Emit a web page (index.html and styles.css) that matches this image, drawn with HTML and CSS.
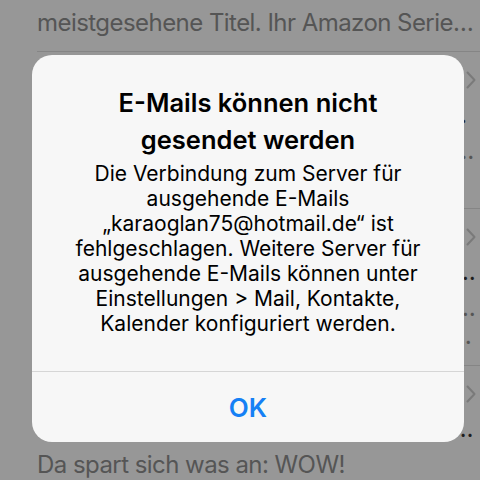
FILE: index.html
```html
<!DOCTYPE html>
<html lang="de">
<head>
<meta charset="utf-8">
<title>Mail</title>
<link rel="stylesheet" href="styles.css">
</head>
<body>
<div class="screen">
  <div class="list">
    <div class="row row-tail">
      <p class="preview">meistgesehene Titel. Ihr Amazon Serien- und Filmtipp der Woche</p>
    </div>
    <div class="row">
      <div class="head"><span class="sender">Amazon Video</span><span class="time">Gestern</span><svg class="chev" viewBox="0 0 10 18" width="10" height="18"><polyline points="1.5,1.5 8.5,9 1.5,16.5"/></svg></div>
      <p class="subject">Neu bei Prime Video: Die Highlights dieser Woche im Überblick</p>
      <p class="preview">Entdecken Sie jetzt die neuesten Filme und Serien für Sie und Ihre Familie.</p>
      <p class="preview">Jetzt ansehen.</p>
    </div>
    <div class="row">
      <div class="head"><span class="sender">Newsletter</span><span class="time">Dienstag</span><svg class="chev" viewBox="0 0 10 18" width="10" height="18"><polyline points="1.5,1.5 8.5,9 1.5,16.5"/></svg></div>
      <p class="subject">Ihre wöchentliche Übersicht mit allen aktuellen Angeboten</p>
      <p class="preview">Sehr geehrter Kunde, in dieser Woche haben wir wieder tolle Angebote für</p>
      <p class="preview">Sie zusammengestellt, die Sie nicht verpassen sollten und vieles mehr</p>
    </div>
    <div class="row">
      <div class="head"><span class="sender">Angebote</span><span class="time">Montag</span><svg class="chev" viewBox="0 0 10 18" width="10" height="18"><polyline points="1.5,1.5 8.5,9 1.5,16.5"/></svg></div>
      <p class="subject">Sparen Sie bis zu 50 % auf ausgewählte Artikel im Shop heute</p>
      <p class="preview">Da spart sich was an: WOW!</p>
    </div>
  </div>

  <div class="alert">
    <div class="alert-content">
      <h1 class="alert-title">E-Mails können nicht<br>gesendet werden</h1>
      <p class="alert-msg">Die Verbindung zum Server für<br>ausgehende E-Mails<br>„karaoglan75@hotmail.de“ ist<br>fehlgeschlagen. Weitere Server für<br>ausgehende E-Mails können unter<br>Einstellungen &gt; Mail, Kontakte,<br>Kalender konfiguriert werden.</p>
    </div>
    <div class="alert-actions">
      <button class="alert-btn">OK</button>
    </div>
  </div>
</div>
</body>
</html>
```

FILE: styles.css
```css
html, body {
  margin: 0;
  padding: 0;
}
body {
  background: #979797;
  font-family: Inter, "Noto Sans", "Liberation Sans", sans-serif;
}
.screen {
  position: relative;
  width: 480px;
  height: 480px;
  overflow: hidden;
}
.list {
  display: flex;
  flex-direction: column;
}
.row {
  box-sizing: border-box;
  height: 157px;
  border-bottom: 1px solid #858585;
  margin-left: 37px;
  padding: 14px 3px 0 0;
  display: flex;
  flex-direction: column;
  flex-shrink: 0;
}
.row-tail {
  height: 52px;
  padding-top: 9px;
}
.head {
  height: 28px;
  display: flex;
  align-items: center;
  gap: 8px;
  font-size: 24px;
  color: #2a2a2a;
}
.sender {
  flex: 1;
  font-weight: 600;
}
.time {
  color: #555;
  font-size: 21px;
}
.chev {
  flex-shrink: 0;
  margin-right: 1px;
  fill: none;
  stroke: #7a7a7a;
  stroke-width: 2;
  stroke-linecap: round;
  stroke-linejoin: round;
}
.subject,
.preview {
  margin: 0;
  font-size: 24px;
  line-height: 28px;
  letter-spacing: -0.55px;
  white-space: nowrap;
  overflow: hidden;
  text-overflow: ellipsis;
}
.subject {
  margin-top: 7px;
  color: #1e1e1e;
}
.preview {
  color: #555;
}
.subject + .preview {
  margin-top: 8px;
}
.row-tail .preview {
  margin-top: 0;
}

.alert {
  position: absolute;
  left: 32px;
  top: 55px;
  width: 432px;
  height: 387px;
  background: #f7f7f7;
  border-radius: 20px;
  display: flex;
  flex-direction: column;
  overflow: hidden;
}
.alert-content {
  flex: 1;
  padding-top: 29px;
  text-align: center;
  color: #000;
}
.alert-title {
  margin: 0;
  font-size: 25.5px;
  line-height: 37px;
  font-weight: 600;
}
.alert-msg {
  margin: 3px 0 0;
  font-size: 21px;
  line-height: 25px;
  font-weight: 400;
}
.alert-actions {
  height: 70px;
  border-top: 1px solid #d6d6d6;
  display: flex;
}
.alert-btn {
  flex: 1;
  border: 0;
  background: transparent;
  font-family: inherit;
  font-size: 26px;
  font-weight: 600;
  color: #1580f5;
  padding: 0;
}
```
